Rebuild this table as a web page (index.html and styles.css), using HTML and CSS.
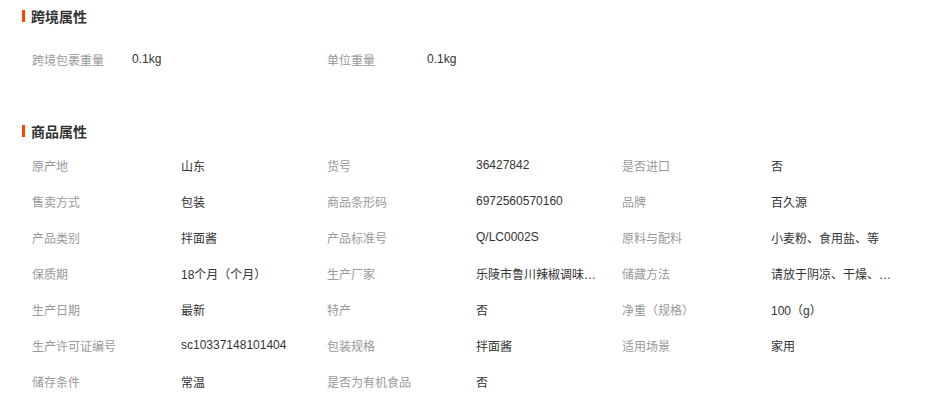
FILE: index.html
```html
<!DOCTYPE html>
<html lang="zh-CN">
<head>
<meta charset="utf-8">
<title>商品属性</title>
<link rel="stylesheet" href="styles.css">
</head>
<body>
<div class="page">
  <section class="attr-section">
    <h3 class="attr-title"><span class="bar"></span>跨境属性</h3>
    <ul class="attr-list cross">
      <li class="attr-item"><span class="label">跨境包裹重量</span><span class="value">0.1kg</span></li>
      <li class="attr-item"><span class="label">单位重量</span><span class="value">0.1kg</span></li>
    </ul>
  </section>
  <section class="attr-section second">
    <h3 class="attr-title"><span class="bar"></span>商品属性</h3>
    <ul class="attr-list goods">
      <li class="attr-item"><span class="label">原产地</span><span class="value">山东</span></li>
      <li class="attr-item"><span class="label">货号</span><span class="value">36427842</span></li>
      <li class="attr-item"><span class="label">是否进口</span><span class="value">否</span></li>
      <li class="attr-item"><span class="label">售卖方式</span><span class="value">包装</span></li>
      <li class="attr-item"><span class="label">商品条形码</span><span class="value">6972560570160</span></li>
      <li class="attr-item"><span class="label">品牌</span><span class="value">百久源</span></li>
      <li class="attr-item"><span class="label">产品类别</span><span class="value">拌面酱</span></li>
      <li class="attr-item"><span class="label">产品标准号</span><span class="value">Q/LC0002S</span></li>
      <li class="attr-item"><span class="label">原料与配料</span><span class="value">小麦粉、食用盐、等</span></li>
      <li class="attr-item"><span class="label">保质期</span><span class="value">18个月（个月）</span></li>
      <li class="attr-item"><span class="label">生产厂家</span><span class="value">乐陵市鲁川辣椒调味品有限公司</span></li>
      <li class="attr-item"><span class="label">储藏方法</span><span class="value">请放于阴凉、干燥、通风处</span></li>
      <li class="attr-item"><span class="label">生产日期</span><span class="value">最新</span></li>
      <li class="attr-item"><span class="label">特产</span><span class="value">否</span></li>
      <li class="attr-item"><span class="label">净重（规格）</span><span class="value">100（g）</span></li>
      <li class="attr-item"><span class="label">生产许可证编号</span><span class="value">sc10337148101404</span></li>
      <li class="attr-item"><span class="label">包装规格</span><span class="value">拌面酱</span></li>
      <li class="attr-item"><span class="label">适用场景</span><span class="value">家用</span></li>
      <li class="attr-item"><span class="label">储存条件</span><span class="value">常温</span></li>
      <li class="attr-item"><span class="label">是否为有机食品</span><span class="value">否</span></li>
    </ul>
  </section>
</div>
</body>
</html>
```

FILE: styles.css
```css
html, body {
  margin: 0;
  padding: 0;
  background: #fff;
  overflow: hidden;
}
body {
  font-family: Tahoma, "Liberation Sans", "Noto Sans CJK SC", sans-serif;
  font-size: 12px;
  color: #333;
}
.page {
  padding-left: 22px;
}
.attr-section.second {
  margin-top: 38px;
}
.attr-title {
  display: flex;
  align-items: center;
  height: 32px;
  margin: 0;
  font-size: 14px;
  font-weight: bold;
  color: #333;
  font-family: "Noto Sans CJK SC", sans-serif;
}
.attr-title .bar {
  display: block;
  width: 3px;
  height: 12px;
  background: #ff4400;
  margin-right: 6px;
}
.attr-list {
  list-style: none;
  margin: 0;
  padding: 0 0 0 10px;
  display: grid;
  grid-template-columns: repeat(3, 295px);
  grid-auto-rows: 36px;
}
.attr-list.cross {
  margin-top: 9px;
}
.attr-item {
  display: flex;
  align-items: center;
  min-width: 0;
}
.label {
  color: #999;
  flex: 0 0 149px;
  white-space: nowrap;
}
.cross .label {
  flex-basis: 100px;
}
.value {
  color: #333;
  max-width: 132px;
  white-space: nowrap;
  overflow: hidden;
  text-overflow: ellipsis;
}
```
